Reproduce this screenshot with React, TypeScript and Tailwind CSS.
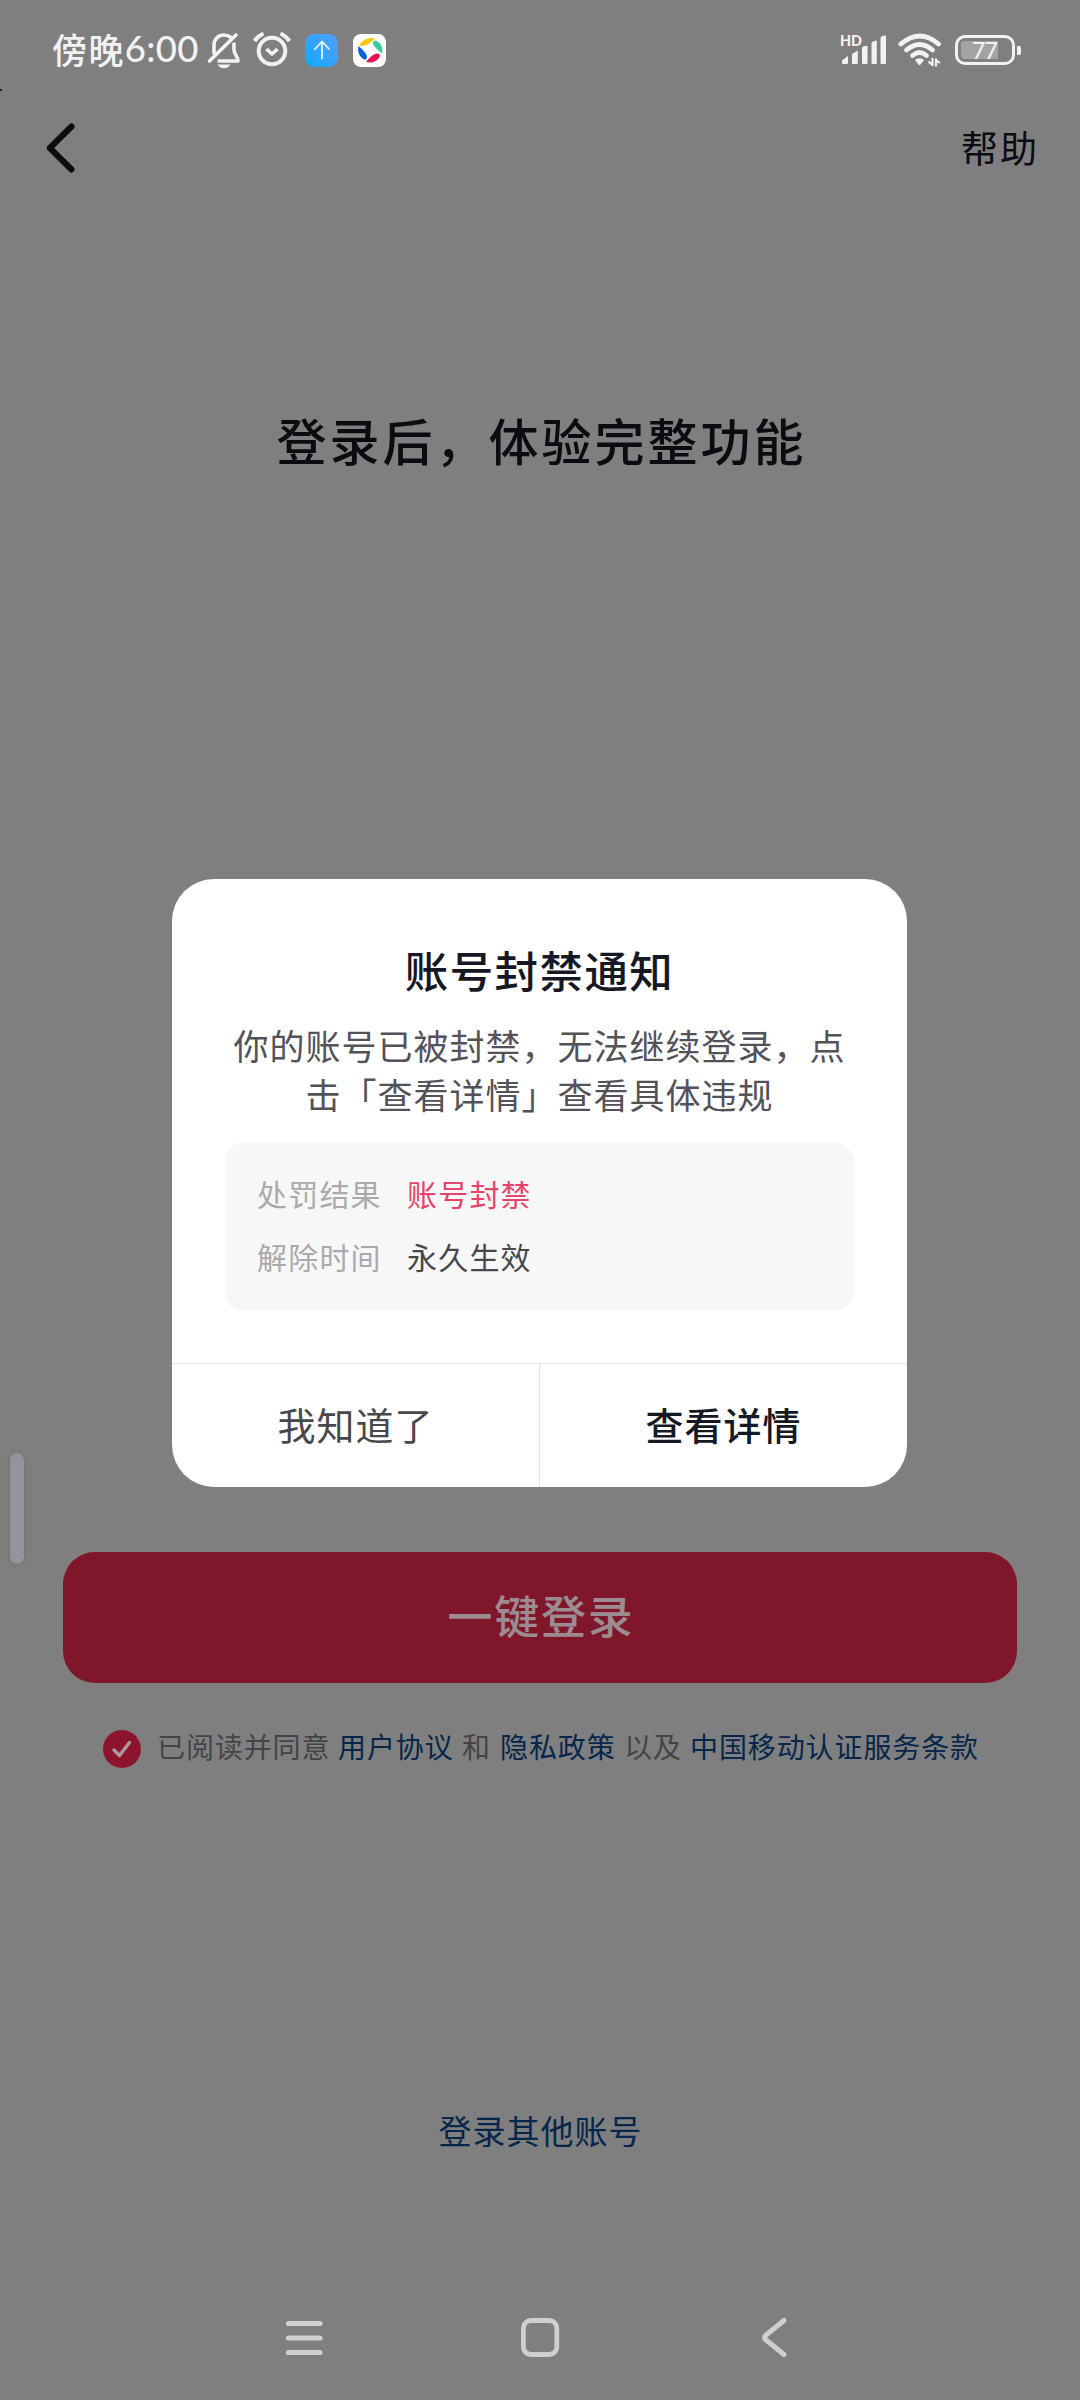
const cjk = "font-['Noto_Sans_CJK_SC',sans-serif]"

const StatusBar = () => {
  return (
    <header className="flex h-[100px] w-full items-center justify-between pr-[59px] pl-[52px] text-[#f2f2f2]">
      <div className="flex items-center">
        <div className="flex h-[100px] w-[148px] items-center pb-[4px] whitespace-nowrap font-medium">
          <span className="text-[35px] leading-none tracking-[1.4px]">傍晚</span>
          <span className="font-['Lato','Noto_Sans_CJK_SC',sans-serif] text-[36.500px] leading-none tracking-[0.3px]">6:00</span>
        </div>
        {/* muted bell */}
        <svg className="ml-[6px]" width="36" height="40" viewBox="0 0 36 40" fill="none" stroke="currentColor" strokeWidth="3.6" strokeLinecap="round" strokeLinejoin="round">
          <path d="M8 23V15C8 9 12.500 5 18 5C21 5 23 6 25 7.500" />
          <path d="M30 5L3.500 31" />
          <path d="M28 14V20C28 24 32 26.500 32 31H13" />
          <path d="M11.500 34.500H24.500C23 37 21 38.300 18 38.300C15 38.300 13 37 11.500 34.500Z" fill="currentColor" stroke="none" />
        </svg>
        {/* alarm */}
        <svg className="ml-[10px]" width="40" height="40" viewBox="0 0 40 40" fill="none" stroke="currentColor" strokeWidth="4" strokeLinejoin="round">
          <circle cx="20" cy="21" r="13.300" />
          <path d="M14.500 19L20 24L25.500 19" strokeWidth="3.600" />
          <path d="M2.500 11Q6 6 11.500 3.500" />
          <path d="M28.500 3.500Q34 6 37.500 11" />
        </svg>
        <div className="ml-[13px] flex size-[33px] items-center justify-center rounded-[9px] bg-linear-to-bl from-[#4a9fff] to-[#00a8ff]">
          <svg width="18" height="20" viewBox="0 0 18 20" fill="none" stroke="#e8f6ff" strokeWidth="1.800" strokeLinecap="round">
            <path d="M9 18.500V2M2 9L9 1.500L16 9" />
          </svg>
        </div>
        <div className="ml-[15px] flex size-[33px] items-center justify-center rounded-[8px] bg-white">
          <svg width="26" height="26" viewBox="0 0 26 26">
            <path d="M2.500 8C5 2.500 12 -0.500 18 1.500C15 4.500 9 9 5.500 9C4 9 3 8.800 2.500 8Z" fill="#fbc70a" />
            <path d="M18.500 3.500C23 5 26.500 10 25 16.500C22 14 16.500 9.500 16 6.500C16 4.500 17 3.500 18.500 3.500Z" fill="#34cfa0" />
            <path d="M1.500 9C5 12 10 17 10 20C10 22 8.500 23 7 22.500C2.500 20 0 14.500 1.500 9Z" fill="#0b63dc" />
            <path d="M9 24.800C12 21 17 16.500 20 16.500C22.500 16.500 23.500 18 22.500 20C20 25 14 26.500 9 24.800Z" fill="#f0104f" />
          </svg>
        </div>
      </div>

      <div className="flex items-center">
        <svg className="overflow-visible" width="48" height="46" viewBox="0 -6 48 46" fill="currentColor">
          <text x="0" y="13" fontFamily="Lato" fontWeight="900" fontSize="15" textLength="22" lengthAdjust="spacingAndGlyphs">HD</text>
          <path d="M2 30V27.500L8 23V30Q8 31 7 31H3Q2 31 2 30Z" />
          <path d="M12 30V21L17.800 17.500V30Q17.800 31 16.800 31H13Q12 31 12 30Z" />
          <path d="M22 30V15.500Q22 13 25 13H27.500V30Q27.500 31 26.500 31H23Q22 31 22 30Z" />
          <path d="M31.500 30V10.500Q31.500 8 36.800 7.500V30Q36.800 31 35.800 31H32.500Q31.500 31 31.500 30Z" />
          <path d="M40.500 30V5.500Q40.500 2.500 46 2.500V30Q46 31 45 31H41.500Q40.500 31 40.500 30Z" />
        </svg>
        <svg className="ml-[10px]" width="44" height="36" viewBox="0 0 44 36" fill="none" stroke="currentColor" strokeWidth="4.800" strokeLinecap="round">
          <path d="M2.800 12Q22 -4 40.500 12" />
          <path d="M8.500 18Q21.500 7 34.500 18" />
          <path d="M14.500 23.500Q21.500 17.500 28.500 23.500" />
          <path d="M21.500 27C23.500 27 24.500 27.600 25 28.300L22 32Q21.500 32.500 21 32L18 28.300C18.500 27.600 19.500 27 21.500 27Z" fill="currentColor" strokeWidth="1.500" />
          <path d="M34.500 26V34M34.500 33L30.500 29.500M38 34.500V26.500M38 28L41.800 31" strokeWidth="2.200" strokeLinecap="butt" />
        </svg>
        <div className="ml-[13px] flex h-[30px] w-[60px] items-center rounded-[10px] border-[3px] border-[#f2f2f2] p-[3px]">
          <div className="flex h-[18px] w-[37px] items-center justify-end rounded-l-[4px] bg-[#a3a3a3] pr-[1px]">
            <span className="font-['Lato',sans-serif] text-[23px] leading-none font-medium tracking-[-0.800px]">77</span>
          </div>
        </div>
        <div className="ml-[2px] h-[9px] w-[4px] rounded-r-[2px] bg-[#f2f2f2]" />
      </div>
    </header>
  )
}

const NavBar = () => {
  return (
    <nav className="mt-[143px] flex h-[80px] w-full items-center pl-[284px]">
      <svg width="40" height="44" viewBox="0 0 40 44" stroke="#cfcfcf" strokeWidth="5.200" strokeLinecap="round">
        <path d="M4.500 7.500H36M4.500 22H36M4.500 36.500H36" />
      </svg>
      <svg className="ml-[194px]" width="44" height="44" viewBox="0 0 44 44" fill="none" stroke="#cfcfcf" strokeWidth="4.800">
        <rect x="5.400" y="4.500" width="33.400" height="34" rx="7.500" />
      </svg>
      <svg className="ml-[198px]" width="32" height="44" viewBox="0 0 32 44" fill="none" stroke="#cfcfcf" strokeWidth="5" strokeLinecap="round" strokeLinejoin="round">
        <path d="M24 4.500L6 19Q3.500 21.500 6 24L24 38.500" />
      </svg>
    </nav>
  )
}

const BanDialog = () => {
  return (
    <section className="mt-[406px] ml-[172px] flex h-[608px] w-[735px] flex-col overflow-hidden rounded-[42px] bg-white">
      <h2 className="mt-[59px] text-center text-[43.500px] leading-[64px] font-medium tracking-[1.400px] text-[#161823]">账号封禁通知</h2>
      <p className="mt-[19px] text-center text-[35px] leading-[48.500px] tracking-[1px] text-[#525258]">
        你的账号已被封禁，无法继续登录，点
        <br />
        击「查看详情」查看具体违规
      </p>
      <div className="mt-[24px] ml-[53px] flex h-[169px] w-[629px] flex-col justify-center rounded-[20px] bg-[#f7f7f7] pb-[4px] pl-[32px] text-[30px] leading-[63px] tracking-[1.200px]">
        <div className="flex">
          <span className="w-[150px] text-[#aaaaac]">处罚结果</span>
          <span className="text-[#e6446a]">账号封禁</span>
        </div>
        <div className="flex">
          <span className="w-[150px] text-[#aaaaac]">解除时间</span>
          <span className="text-[#47474c]">永久生效</span>
        </div>
      </div>
      <div className="mt-auto flex h-[124px] border-t border-[#e2e2e3] text-[38px] tracking-[1px]">
        <button className="flex w-[368px] items-center justify-center border-r border-[#e2e2e3] pb-[4px] text-[#47474c]">我知道了</button>
        <button className="flex flex-1 items-center justify-center pb-[4px] font-medium text-[#161823]">查看详情</button>
      </div>
    </section>
  )
}

export default function App() {
  return (
    <main className={`relative flex h-[2400px] w-[1080px] flex-col overflow-hidden bg-[#7f7f7f] ${cjk}`}>
      <StatusBar />

      <div className="flex h-[96px] items-center justify-between pr-[41px] pl-[44px]">
        <svg width="34" height="54" viewBox="0 0 34 54" fill="none" stroke="#0b0b11" strokeWidth="6" strokeLinecap="round" strokeLinejoin="round">
          <path d="M27.500 5.500L5.800 27L27.500 48.500" />
        </svg>
        <span className="text-[37px] tracking-[2px] text-[#0b0b11]">帮助</span>
      </div>

      <h1 className="mt-[209px] pl-[3px] text-center text-[50px] leading-[68px] font-medium tracking-[3px] text-[#0b0b11]">登录后，体验完整功能</h1>

      <BanDialog />

      <button className="mt-[65px] ml-[63px] flex h-[131px] w-[954px] items-center justify-center rounded-[32px] bg-[#80162a] pb-[5px] pl-[2px] text-[45px] font-medium tracking-[1.700px] text-[#9c8b90]">
        一键登录
      </button>

      <div className="mt-[42px] flex h-[48px] items-center pl-[103px] text-[28px] whitespace-nowrap text-[#444446]">
        <span className="mr-[16px] flex size-[38px] items-center justify-center rounded-full bg-[#8e142e]">
          <svg width="22" height="20" viewBox="0 0 22 20" fill="none" stroke="#a99a9e" strokeWidth="3.400" strokeLinecap="round" strokeLinejoin="round">
            <path d="M3 11L8.500 16.500L18.500 3.500" />
          </svg>
        </span>
        <p className="flex pb-[6px]">
          <span className="w-[181px] tracking-[0.900px]">已阅读并同意</span>
          <span className="w-[124px] tracking-[0.900px] text-[#06264b]">用户协议</span>
          <span className="w-[38px]">和</span>
          <span className="w-[124px] tracking-[0.900px] text-[#06264b]">隐私政策</span>
          <span className="w-[66px] tracking-[0.900px]">以及</span>
          <span className="tracking-[0.900px] text-[#06264b]">中国移动认证服务条款</span>
        </p>
      </div>

      <span className="mt-[332px] pl-[1px] text-center text-[33px] leading-[50px] tracking-[1px] text-[#06264b]">登录其他账号</span>

      <NavBar />

      {/* edge gesture handle floating over the page */}
      <div className="absolute top-[1453px] left-[10px] h-[111px] w-[14px] rounded-full bg-[#95949c] shadow-[0_0_4px_rgba(90,90,100,0.5)]" />
      <div className="absolute top-[89px] left-0 h-[2px] w-[2px] bg-[#222]" />
    </main>
  )
}
